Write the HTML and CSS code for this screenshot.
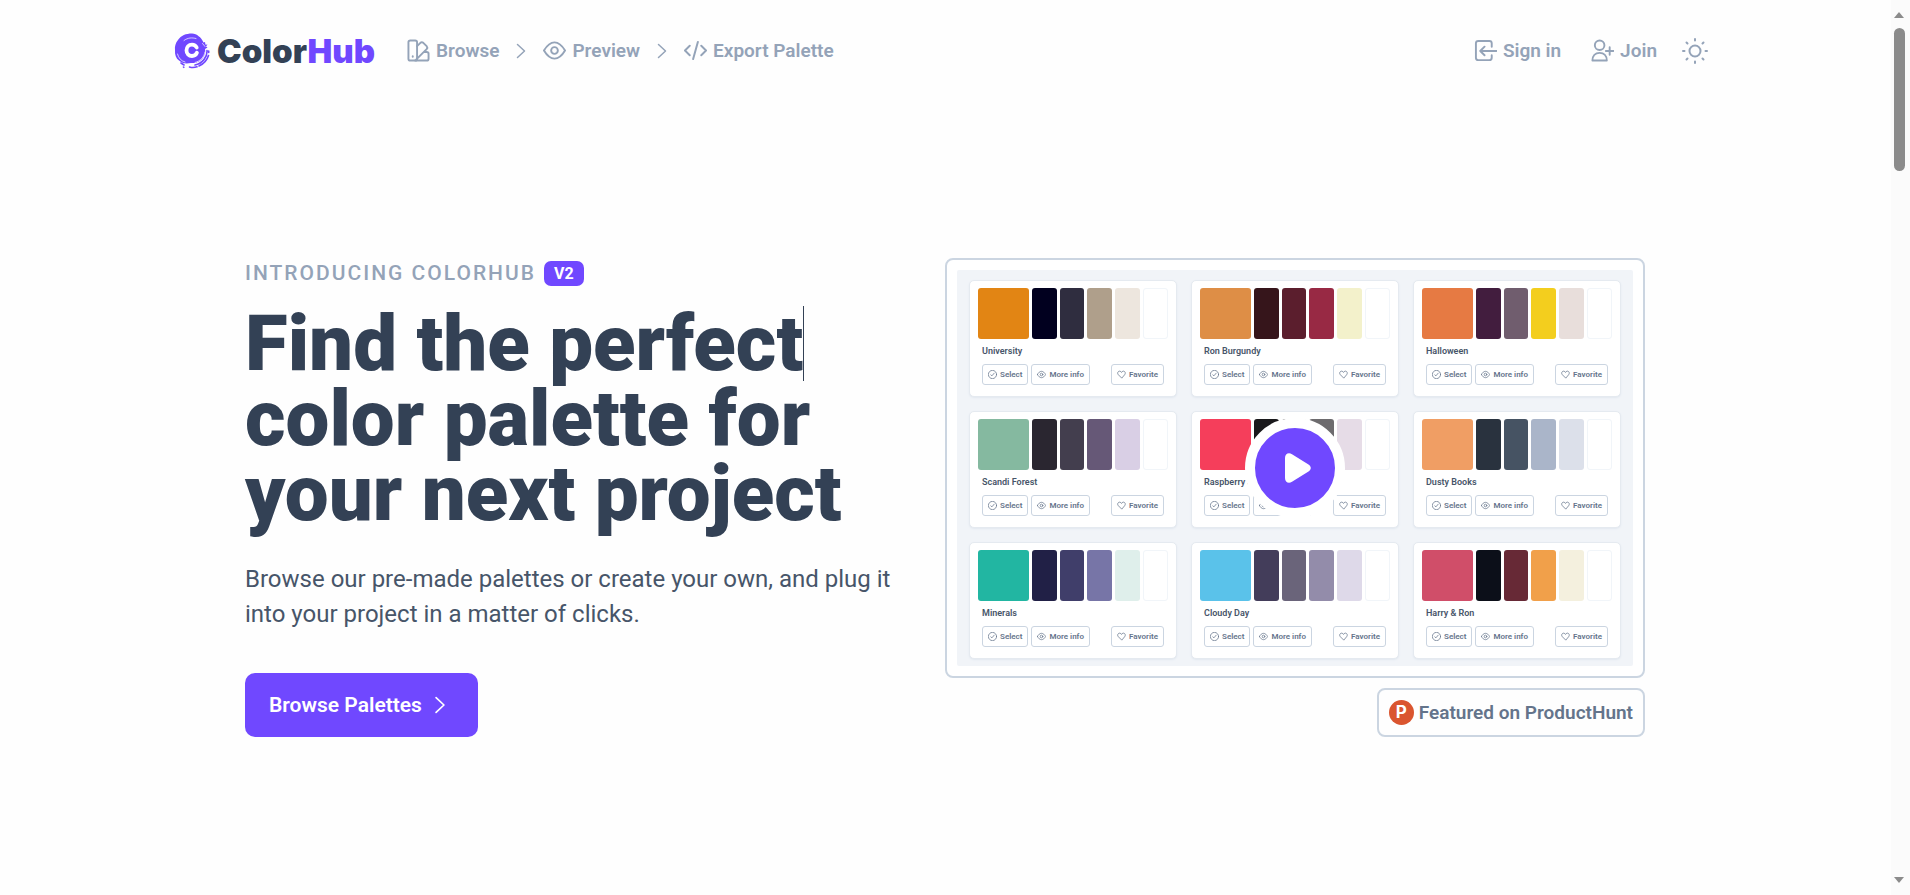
FILE: index.html
```html
<!DOCTYPE html>
<html lang="en">
<head>
<meta charset="utf-8">
<meta name="viewport" content="width=device-width, initial-scale=1">
<title>ColorHub</title>
<link rel="stylesheet" href="styles.css">
</head>
<body>
<svg class="sprite" aria-hidden="true">
  <symbol id="chevron" viewBox="0 0 10 16"><path d="M1.500 1.500 8.500 8l-7 6.500"/></symbol>
  <symbol id="check" viewBox="0 0 24 24"><circle cx="12" cy="12" r="11"/><path d="m7.500 13 3 2.500 6-7"/></symbol>
  <symbol id="eye" viewBox="0 0 24 24"><path d="M1 12C4 7 7.500 3.500 12 3.500s8 3.500 11 8.500c-3 5-6.500 8.500-11 8.500S4 17 1 12Z"/><circle cx="12" cy="12" r="3.500"/></symbol>
  <symbol id="heart" viewBox="0 0 24 24"><path d="M12 21 3.500 12.500C-.5 8 3 3 7 3c2.500 0 4 1.500 5 3.500C13 4.500 14.500 3 17 3c4 0 7.500 5 3.500 9.500Z"/></symbol>
</svg>
<header class="header">
  <a class="logo" href="#">
    <svg class="logo-mark" viewBox="0 0 36 36" aria-hidden="true">
      <path fill="#7048ff" d="M18 .5C12 .5 7 2.500 4 7c-2.500 3-3.500 6.500-3 10.500-.3 4 1 8 4 10C8 30.500 12 31 17 30c6 .5 10-2 12.500-6 2-3 2-6 1.500-8l2.500-1.500-1.500-1 1.500-2-2 .3-.5-2.800-1.500.5C27 4 23 1 18 .5Z"/>
      <path fill="none" stroke="#7048ff" stroke-width="1.600" stroke-linecap="round" d="M33 17.500c.5 6.500-4.500 13-12 14.500M34.700 18v1.500M34.500 22.500c-1.500 5-5 8.500-9.500 10.500M7 30l3 2M9.500 34l.3.300M15.500 34c3 1 5 .7 7.500-.2"/>
      <path fill="none" stroke="#fff" stroke-width=".7" stroke-linecap="round" d="M10 7.500C14 4.500 18 4.500 22 5.500M3.500 21c1 4 3.500 7 7.500 8M31 19c-.8 5-4.500 9-10 10.500M28.500 10.500l2.500 3"/>
      <path fill="none" stroke="#fff" stroke-width="3.800" d="M22.700 14.500c-1-2-2.600-2.900-4.700-2.900-3.300 0-5.500 2.400-5.500 5.700s2.200 5.700 5.500 5.700c2.300 0 4-1 4.900-3.200"/>
    </svg>
    <span class="wordmark">Color<span class="wordmark-accent">Hub</span></span>
  </a>
  <nav class="nav" aria-label="Main">
    <a class="nav-link" href="#"><svg class="icon" viewBox="0 0 24 24" aria-hidden="true"><rect x="1.500" y="1.500" width="9" height="21" rx="2"/><path d="M10.500 7.500 14 4c1-.8 2-.8 3 0l3.500 3.500c.8.900.8 2 0 3L9.500 21.500M18 13.500h2.500c1.200 0 2 .8 2 2v5c0 1.200-.8 2-2 2H8.500"/><path d="M6 18v.5"/></svg>Browse</a>
    <svg class="chevron" aria-hidden="true"><use href="#chevron"/></svg>
    <a class="nav-link" href="#"><svg class="icon" aria-hidden="true"><use href="#eye"/></svg>Preview</a>
    <svg class="chevron" aria-hidden="true"><use href="#chevron"/></svg>
    <a class="nav-link" href="#"><svg class="icon" viewBox="0 0 24 24" aria-hidden="true"><path d="M6 7 1 12l5 5M18 7l5 5-5 5M14.500 3l-5 18"/></svg>Export Palette</a>
  </nav>
  <div class="account">
    <a class="nav-link" href="#"><svg class="icon" viewBox="0 0 24 24" aria-hidden="true"><path d="M18.500 8V4.500c0-1.500-1-2.500-2.500-2.500H4.500C3 2 2 3 2 4.500v15C2 21 3 22 4.500 22H16c1.500 0 2.500-1 2.500-2.500V17M23.500 12.500h-17M11 8l-4.500 4.500L11 17"/></svg>Sign in</a>
    <a class="nav-link" href="#"><svg class="icon" viewBox="0 0 24 24" aria-hidden="true"><circle cx="9" cy="6.500" r="5"/><path d="M1.500 22.500c0-5 3-8 7.500-8s7.500 3 7.500 8ZM19.500 8.500v8M15.500 12.500h8"/></svg>Join</a>
    <button class="theme-toggle" type="button" aria-label="Switch theme"><svg class="icon-sun" viewBox="0 0 28 28" aria-hidden="true"><circle cx="14" cy="14" r="5.500"/><path d="M14 2v1.500M14 24.500V26M2 14h1.500M24.500 14H26M5.500 5.500l1 1M21.500 21.500l1 1M5.500 22.500l1-1M21.500 6.500l1-1"/></svg></button>
  </div>
</header>
<main class="hero">
  <section class="intro">
    <p class="eyebrow">INTRODUCING COLORHUB <span class="badge">V2</span></p>
    <h1 class="title"><span class="line typed">Find the perfect</span> <span class="line">color palette for</span> <span class="line">your next project</span></h1>
    <p class="lead">Browse our pre-made palettes or create your own, and plug it into your project in a matter of clicks.</p>
    <a class="cta" href="#">Browse Palettes<svg class="cta-chevron" aria-hidden="true"><use href="#chevron"/></svg></a>
  </section>
  <section class="showcase">
    <div class="video">
      <div class="palettes">
        <article class="card">
          <div class="swatches"><i style="background:#e28514"></i><i style="background:#01001f"></i><i style="background:#2f2d3f"></i><i style="background:#af9f8b"></i><i style="background:#ede6de"></i><i style="background:#fff"></i></div>
          <h2 class="name">University</h2>
          <div class="actions"><button type="button"><svg><use href="#check"/></svg>Select</button><button type="button"><svg><use href="#eye"/></svg>More info</button><button type="button"><svg><use href="#heart"/></svg>Favorite</button></div>
        </article>
        <article class="card">
          <div class="swatches"><i style="background:#de8e46"></i><i style="background:#36151b"></i><i style="background:#5b1e2d"></i><i style="background:#982944"></i><i style="background:#f3f1cb"></i><i style="background:#fff"></i></div>
          <h2 class="name">Ron Burgundy</h2>
          <div class="actions"><button type="button"><svg><use href="#check"/></svg>Select</button><button type="button"><svg><use href="#eye"/></svg>More info</button><button type="button"><svg><use href="#heart"/></svg>Favorite</button></div>
        </article>
        <article class="card">
          <div class="swatches"><i style="background:#e67a43"></i><i style="background:#421d3e"></i><i style="background:#705d6e"></i><i style="background:#f3ce1e"></i><i style="background:#e8dedb"></i><i style="background:#fff"></i></div>
          <h2 class="name">Halloween</h2>
          <div class="actions"><button type="button"><svg><use href="#check"/></svg>Select</button><button type="button"><svg><use href="#eye"/></svg>More info</button><button type="button"><svg><use href="#heart"/></svg>Favorite</button></div>
        </article>
        <article class="card">
          <div class="swatches"><i style="background:#85b9a0"></i><i style="background:#2a2630"></i><i style="background:#433e4e"></i><i style="background:#665877"></i><i style="background:#d9cfe5"></i><i style="background:#fff"></i></div>
          <h2 class="name">Scandi Forest</h2>
          <div class="actions"><button type="button"><svg><use href="#check"/></svg>Select</button><button type="button"><svg><use href="#eye"/></svg>More info</button><button type="button"><svg><use href="#heart"/></svg>Favorite</button></div>
        </article>
        <article class="card">
          <div class="swatches"><i style="background:#f53e5b"></i><i style="background:#1a191c"></i><i style="background:#434144"></i><i style="background:#6d6b6e"></i><i style="background:#e6dce7"></i><i style="background:#fff"></i></div>
          <h2 class="name">Raspberry Jam</h2>
          <div class="actions"><button type="button"><svg><use href="#check"/></svg>Select</button><button type="button"><svg><use href="#eye"/></svg>More info</button><button type="button"><svg><use href="#heart"/></svg>Favorite</button></div>
        </article>
        <article class="card">
          <div class="swatches"><i style="background:#f09e64"></i><i style="background:#29323e"></i><i style="background:#465363"></i><i style="background:#aab5c9"></i><i style="background:#dce0ea"></i><i style="background:#fff"></i></div>
          <h2 class="name">Dusty Books</h2>
          <div class="actions"><button type="button"><svg><use href="#check"/></svg>Select</button><button type="button"><svg><use href="#eye"/></svg>More info</button><button type="button"><svg><use href="#heart"/></svg>Favorite</button></div>
        </article>
        <article class="card">
          <div class="swatches"><i style="background:#22b6a2"></i><i style="background:#212046"></i><i style="background:#403e6a"></i><i style="background:#7775a7"></i><i style="background:#dfefeb"></i><i style="background:#fff"></i></div>
          <h2 class="name">Minerals</h2>
          <div class="actions"><button type="button"><svg><use href="#check"/></svg>Select</button><button type="button"><svg><use href="#eye"/></svg>More info</button><button type="button"><svg><use href="#heart"/></svg>Favorite</button></div>
        </article>
        <article class="card">
          <div class="swatches"><i style="background:#5ac2ea"></i><i style="background:#433d5a"></i><i style="background:#6a647a"></i><i style="background:#938caa"></i><i style="background:#ded9e9"></i><i style="background:#fff"></i></div>
          <h2 class="name">Cloudy Day</h2>
          <div class="actions"><button type="button"><svg><use href="#check"/></svg>Select</button><button type="button"><svg><use href="#eye"/></svg>More info</button><button type="button"><svg><use href="#heart"/></svg>Favorite</button></div>
        </article>
        <article class="card">
          <div class="swatches"><i style="background:#d04e69"></i><i style="background:#0c0f19"></i><i style="background:#672936"></i><i style="background:#f1a04a"></i><i style="background:#f4f0de"></i><i style="background:#fff"></i></div>
          <h2 class="name">Harry &amp; Ron</h2>
          <div class="actions"><button type="button"><svg><use href="#check"/></svg>Select</button><button type="button"><svg><use href="#eye"/></svg>More info</button><button type="button"><svg><use href="#heart"/></svg>Favorite</button></div>
        </article>
      </div>
      <button class="play" type="button" aria-label="Play video"><svg viewBox="0 0 26 30" aria-hidden="true"><path d="M0 5C0 .8 3.500-1 7 1.200L23.500 11.500c3 2 3 5 0 7L7 28.800C3.500 31 0 29.200 0 25Z"/></svg></button>
    </div>
    <a class="featured" href="#"><span class="ph-mark">P</span>Featured on ProductHunt</a>
  </section>
</main>
<div class="scrollbar" aria-hidden="true">
  <svg class="scroll-arrow" viewBox="0 0 12 8"><path d="m1 7 5-6 5 6Z"/></svg>
  <div class="scroll-track"><div class="scroll-thumb"></div></div>
  <svg class="scroll-arrow" viewBox="0 0 12 8"><path d="m1 1 5 6 5-6Z"/></svg>
</div>
</body>
</html>
```
FILE: styles.css
```css
* { box-sizing: border-box; }
body {
  margin: 0;
  padding-right: 20px;
  min-height: 100vh;
  background: #fefefe;
  color: #334155;
  font-family: Roboto, "Liberation Sans", sans-serif;
  overflow: hidden;
}
a { color: inherit; text-decoration: none; }
button { font: inherit; color: inherit; cursor: pointer; }
h1, h2, p { margin: 0; }
svg { fill: none; stroke: currentColor; stroke-width: 2; stroke-linecap: round; stroke-linejoin: round; flex: none; }
.sprite { position: absolute; width: 0; height: 0; }

.header {
  display: flex;
  align-items: center;
  max-width: 1542px;
  height: 101px;
  margin: 0 auto;
  padding-right: 7px;
}
.logo { display: flex; align-items: center; gap: 7px; margin-right: 32px; }
.logo-mark { width: 36px; height: 36px; stroke: none; }
.wordmark { font: 900 33px/40px Inter, sans-serif; }
.wordmark-accent { color: #7048ff; }
.nav, .account { display: flex; align-items: center; color: #94a3b8; }
.nav { gap: 17px; }
.nav-link { display: flex; align-items: center; gap: 6px; font-size: 19px; font-weight: 600; line-height: 24px; }
.icon { width: 23px; height: 23px; }
.chevron { width: 10px; height: 16px; stroke-width: 1.500px; }
.account { gap: 30px; margin-left: auto; }
.theme-toggle { display: flex; margin-left: -6px; padding: 0; border: 0; background: none; }
.icon-sun { width: 28px; height: 28px; }

.hero {
  display: grid;
  grid-template-columns: 1fr 1fr;
  max-width: 1400px;
  margin: 0 auto;
  padding: 157px 0;
}
.intro { display: flex; flex-direction: column; align-items: flex-start; }
.eyebrow {
  display: flex;
  align-items: center;
  gap: 8px;
  height: 30px;
  color: #94a3b8;
  font-size: 21px;
  font-weight: 500;
  letter-spacing: 2px;
}
.badge {
  padding: 0 10px;
  border-radius: 7px;
  background: #7048ff;
  color: #fff;
  font-size: 16px;
  font-weight: 700;
  line-height: 25px;
  letter-spacing: 0;
}
.title { margin-top: 18px; font-size: 78px; line-height: 75px; font-weight: 900; white-space: nowrap; }
.line { display: block; width: fit-content; height: 75px; }
.typed { border-right: 1px solid #334155; }
.lead { max-width: 660px; margin-top: 31px; color: #475569; font-size: 24px; line-height: 35px; }
.cta {
  display: flex;
  align-items: center;
  gap: 12px;
  height: 64px;
  margin-top: 41px;
  padding: 0 32px 0 24px;
  border-radius: 10px;
  background: #7048ff;
  color: #fff;
  font-size: 21px;
  font-weight: 600;
}
.cta-chevron { width: 12px; height: 18px; stroke-width: 1.500px; }

.showcase { display: flex; flex-direction: column; align-items: flex-end; gap: 10px; }
.video {
  position: relative;
  width: 100%;
  padding: 10px;
  border: 2px solid #cbd5e1;
  border-radius: 8px;
  background: #fff;
}
.palettes {
  display: grid;
  grid-template-columns: repeat(3, 1fr);
  gap: 14px;
  padding: 10px 12px 7px;
  border-radius: 2px;
  background: #f1f4f8;
}
.card {
  padding: 7px 8px 11px;
  border: 1px solid #e5eaf0;
  border-radius: 5px;
  background: #fff;
  box-shadow: 0 1px 2px #e2e8f0;
}
.swatches { display: grid; grid-template-columns: 51fr repeat(5, 25fr); gap: 3px; height: 51px; }
.swatches i { border-radius: 3px; }
.swatches i:last-child { border: 1px solid #f1f5f9; }
.name { margin: 7px 4px 8px; color: #475569; font-size: 9px; line-height: 10px; font-weight: 600; }
.actions { display: flex; gap: 3px; margin: 0 4px; }
.actions button {
  display: flex;
  align-items: center;
  gap: 3px;
  height: 21px;
  padding: 0 5px;
  border: 1px solid #cbd5e1;
  border-radius: 3px;
  background: #fff;
  color: #64748b;
  font-size: 8px;
  line-height: 10px;
  font-weight: 600;
}
.actions button:last-child { margin-left: auto; }
.actions svg { width: 9px; height: 9px; }
.play {
  position: absolute;
  inset: 0;
  display: flex;
  align-items: center;
  justify-content: center;
  width: 100px;
  height: 100px;
  margin: auto;
  padding: 0 0 0 5px;
  border: 10px solid #fff;
  border-radius: 50%;
  background: #7048ff;
}
.play svg { width: 26px; height: 30px; fill: #fff; stroke: none; }
.featured {
  display: flex;
  align-items: center;
  gap: 5px;
  height: 49px;
  padding: 0 10px;
  border: 2px solid #cbd5e1;
  border-radius: 8px;
  color: #64748b;
  font-size: 19px;
  font-weight: 600;
}
.ph-mark {
  width: 25px;
  height: 25px;
  border-radius: 50%;
  background: #da552f;
  color: #fff;
  font: 700 17px/25px Inter, sans-serif;
  text-align: center;
}

.scrollbar {
  position: fixed;
  inset: 0 0 0 auto;
  display: flex;
  flex-direction: column;
  align-items: center;
  gap: 9px;
  width: 19px;
  padding: 11px 3px 11px 0;
  background: #fbfbfb;
}
.scroll-arrow { width: 12px; height: 8px; fill: #8b8b8b; stroke: none; }
.scroll-track { flex: 1; width: 11px; }
.scroll-thumb { height: 17%; border-radius: 6px; background: #8b8b8b; }
```
